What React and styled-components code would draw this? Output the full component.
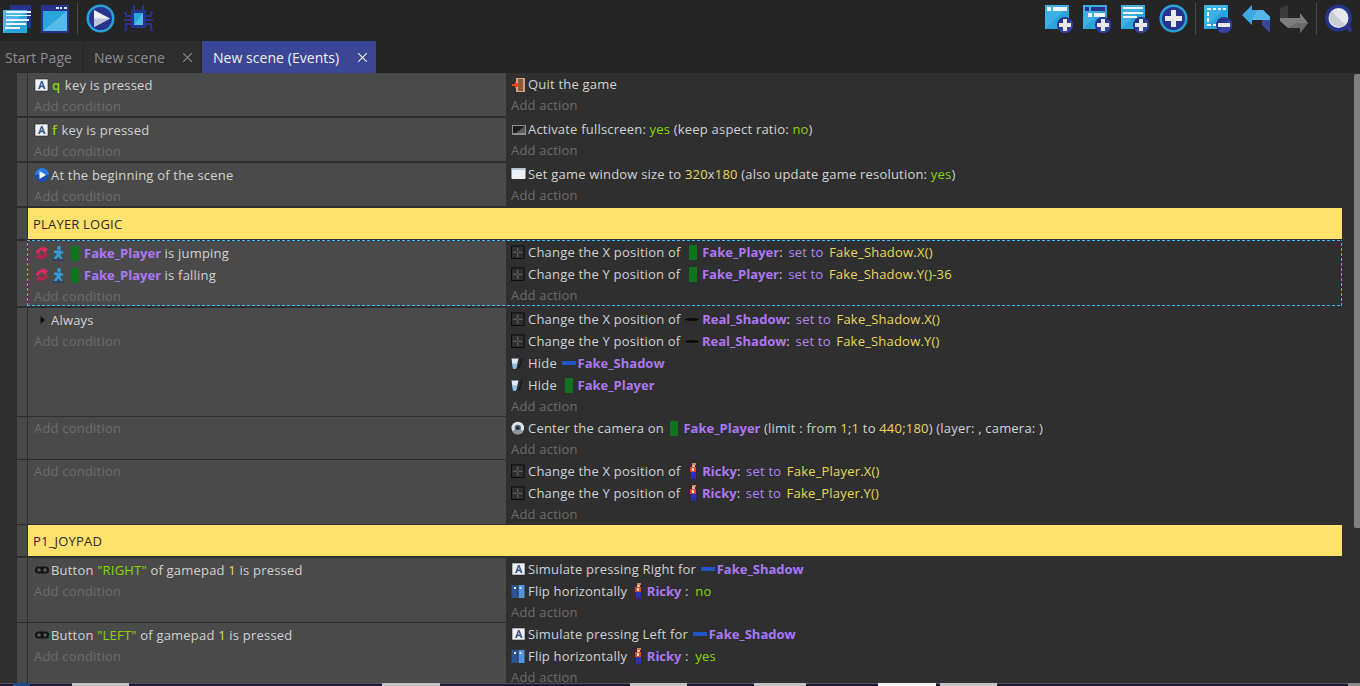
import React from "react";
import styled, { createGlobalStyle } from "styled-components";

const Global = createGlobalStyle`
  html, body { margin: 0; padding: 0; background: #2f2f2f; }
  body { font-family: "Open Sans", "Liberation Sans", sans-serif; overflow: hidden; }
`;

const Page = styled.div`
  width: 1360px;
  height: 686px;
  display: flex;
  flex-direction: column;
  overflow: hidden;
`;

const Toolbar = styled.div`
  height: 41px;
  flex: none;
  background: #252525;
  display: flex;
  align-items: flex-start;
  justify-content: space-between;
`;

const ToolGroup = styled.div`
  display: flex;
  align-items: flex-start;
  height: 38px;
`;

const Tool = styled.div`
  width: 38px;
  height: 38px;
  box-sizing: border-box;
  padding: 5px 0 0 3px;
`;

const Sep = styled.div`
  width: 1px;
  height: 32px;
  margin: 3px 5px 0 1px;
  background: #4a4a4a;
`;

const Art = styled.svg`
  display: block;
  overflow: visible;
`;

const RoundArt = styled(Art)`
  margin-top: -1px;
`;

const TabBar = styled.div`
  height: 32px;
  flex: none;
  background: #252525;
  display: flex;
`;

const Tab = styled.div`
  width: ${(p) => p.$w}px;
  margin-right: 1px;
  display: flex;
  align-items: center;
  justify-content: space-between;
  padding: 0 9px 0 ${(p) => p.$pad}px;
  box-sizing: border-box;
  background: ${(p) => (p.$active ? "#3c4696" : "#2e2e2e")};
  color: ${(p) => (p.$active ? "#f1f1f1" : "#8c8c8c")};
  font-size: 14px;
  letter-spacing: 0.05px;
`;

const Close = styled.svg`
  width: 9px;
  height: 9px;
  stroke: ${(p) => (p.$active ? "#f1f1f1" : "#8c8c8c")};
  stroke-width: 1.2;
`;

const Body = styled.div`
  flex: 1;
  min-height: 0;
  display: flex;
  overflow: hidden;
  background: #2f2f2f;
`;

const Events = styled.div`
  width: 1342px;
  flex: none;
  padding-left: 17px;
  box-sizing: border-box;
  display: flex;
  flex-direction: column;
  gap: 2px;
`;

const Scroll = styled.div`
  width: 6px;
  height: 454px;
  margin: 1px 0 0 12px;
  background: #808080;
  border-radius: 2px 0 0 2px;
`;

const Row = styled.div`
  display: grid;
  grid-template-columns: 10px 1fr;
  column-gap: 1px;
  height: ${(p) => p.$h}px;
  flex: none;
`;

const Handle = styled.div`
  background: #4a4a4a;
`;

const RowMain = styled.div`
  display: grid;
  grid-template-columns: 478px 1fr;
  position: relative;
`;

const dash = "#35bdf8";

const Selection = styled.div`
  position: absolute;
  inset: -1px 0 0 -1px;
  pointer-events: none;
  background:
    repeating-linear-gradient(90deg, ${dash} 0 3px, transparent 3px 5px) top left / 100% 1px no-repeat,
    repeating-linear-gradient(90deg, ${dash} 0 3px, transparent 3px 5px) bottom left / 100% 1px no-repeat,
    repeating-linear-gradient(0deg, ${dash} 0 3px, transparent 3px 5px) top left / 1px 100% no-repeat,
    repeating-linear-gradient(0deg, ${dash} 0 3px, transparent 3px 5px) top right / 1px 100% no-repeat;
`;

const Conditions = styled.div`
  background: #4a4a4a;
  padding: 1px 0 0 6px;
`;

const Actions = styled.div`
  padding: 0 0 0 5px;
`;

const Line = styled.div`
  height: 22px;
  display: flex;
  align-items: center;
  font-size: 13px;
  letter-spacing: 0.2px;
  white-space: pre;
  color: #d2d2d2;
`;

const AddLine = styled(Line)`
  height: 20px;
  color: #6c6c6c;
`;

const Comment = styled.div`
  background: #ffe26c;
  color: #2a2a2a;
  font-size: 13px;
  letter-spacing: 0.2px;
  display: flex;
  align-items: center;
  padding-left: 5px;
`;

const Obj = styled.b`
  color: #ab78f2;
  font-weight: 700;
  letter-spacing: 0;
`;

const Lit = styled.span`
  color: #86d800;
`;

const KeyName = styled(Lit)`
  margin: 0 1px;
  font-weight: 600;
`;

const FlipValue = styled(Lit)`
  margin-left: 3px;
`;

const Num = styled.span`
  color: #e6d95a;
`;

const SetTo = styled.span`
  color: #b384f2;
  margin: 0 2px;
`;

const IconBox = styled.svg`
  flex: none;
  width: ${(p) => p.$w || 16}px;
  height: 16px;
  margin-right: ${(p) => (p.$mr === undefined ? 1 : p.$mr)}px;
`;

const Bar = styled.span`
  flex: none;
  width: 8px;
  height: 15px;
  background: #0f7320;
  margin: 0 5px 0 ${(p) => p.$ml || 0}px;
`;

const Dash = styled.span`
  flex: none;
  width: 14px;
  height: ${(p) => (p.$black ? 3 : 4)}px;
  background: ${(p) => (p.$black ? "#0a0a0a" : "#1f55c8")};
  border-radius: ${(p) => (p.$black ? "50%" : "0")};
  margin: 0 ${(p) => (p.$black ? 3 : 2)}px 0 1px;
`;

const Taskbar = styled.div`
  height: 3px;
  flex: none;
  background: #1f1a2e;
  border-top: 1px solid #55506a;
  box-sizing: border-box;
  display: flex;
`;

const Peek = styled.span`
  margin-left: ${(p) => p.$gap}px;
  width: ${(p) => p.$w}px;
  margin-top: -1px;
  height: 3px;
  background: ${(p) => p.$c};
`;

const RickyArt = styled.svg`
  flex: none;
  width: 8px;
  height: 17px;
  margin: 0 5px 0 ${(p) => p.$ml || 5}px;
`;

/* ---- toolbar art ---- */
const Square = ({ children, w = 28 }) => (
  <Art width={w} height="28" viewBox={`0 0 ${w} 28`} shapeRendering="crispEdges">
    {children}
  </Art>
);

const Plus = ({ minus }) => (
  <g shapeRendering="auto">
    <circle cx="20" cy="20" r="8" fill="#25358f" />
    <path d="M14.300 25.700 25.700 14.300A8 8 0 0 1 14.300 25.700z" fill="#34439f" />
    {minus ? (
      <rect x="14" y="18" width="12" height="4" fill="#e8e8e8" />
    ) : (
      <path d="M18 14h4v4h4v4h-4v4h-4v-4h-4v-4h4z" fill="#e8e8e8" />
    )}
  </g>
);

const TBPages = () => (
  <Square>
    <path d="M7 0h21v23H7z" fill="#27348c" />
    <path d="M0 5h24v23H0z" fill="#2aa5dc" />
    <path d="M0 5h24L0 28z" fill="#4cb8e6" shapeRendering="auto" />
    <path d="M3 6h22v2H3zM3 11h25v-1H3zM3 14h23v2H3zM3 18h20v2H3zM2 22h15v2H2z" fill="#eef4fb" />
    <path d="M24 6h4v2h-4zM26 10h2v1h-2z" fill="#eef4fb" />
  </Square>
);

const TBWindow = () => (
  <Square>
    <path d="M0 0h28v28H0z" fill="#27348c" />
    <path d="M2 6h24v20H2z" fill="#2aa5dc" />
    <path d="M26 6v20H2z" fill="#55bbe8" shapeRendering="auto" />
    <path d="M15 2h3v2h-3zM19 2h2v2h-2zM23 2h3v2h-3z" fill="#dfe8f5" />
  </Square>
);

const TBPlay = () => (
  <RoundArt width="29" height="30" viewBox="0 0 29 30">
    <circle cx="14.500" cy="14.500" r="14" fill="#29a0d6" />
    <circle cx="14.500" cy="14.500" r="11.500" fill="#27348c" />
    <path d="M8 6 24 14.500 8 23z" fill="#eef1f6" />
    <path d="M8 14.500h16L8 23z" fill="#bcc6da" />
  </RoundArt>
);

const TBChip = () => (
  <Square w={29}>
    <path d="M9 0h2v5h7V0h2v5h2v18H7V5h2z" fill="#27348c" />
    <path d="M10 8h9v12h-9z" fill="#2aa5dc" />
    <path d="M19 8v12h-9z" fill="#55bbe8" shapeRendering="auto" />
    <path d="M0 7h3v3h4v2H1V9H0zM22 10h4V7h3v2h-1v3h-6zM0 14h7v2H0zM22 14h7v2h-7zM1 18h6v2H3v6H0v-2h1zM22 18h6v6h1v2h-3v-6h-4z" fill="#27348c" />
  </Square>
);

const TBAddEvent = ({ kind }) => (
  <Square>
    <path d="M0 0h24v24H0z" fill="#2aa5dc" />
    <path d="M0 0h24L0 24z" fill="#40b0e2" shapeRendering="auto" />
    {kind === 0 && <path d="M2 2h4v4H2zM8 2h14v4H8z" fill="#eef4fb" />}
    {kind === 1 && (
      <>
        <path d="M2 2h4v4H2zM8 2h14v4H8z" fill="#27348c" />
        <path d="M5 8h4v4H5zM11 8h11v4H11z" fill="#eef4fb" />
      </>
    )}
    {kind === 2 && <path d="M2 2h20v2H2zM2 7h20v2H2zM2 11h14v2H2z" fill="#eef4fb" />}
    <Plus />
  </Square>
);

const TBAddCircle = () => (
  <RoundArt width="29" height="30" viewBox="0 0 29 30">
    <circle cx="14.500" cy="14.500" r="14" fill="#29a0d6" />
    <circle cx="14.500" cy="14.500" r="11.500" fill="#27348c" />
    <path d="M12 6h5v6h6v5h-6v6h-5v-6H6v-5h6z" fill="#e8e8e8" />
  </RoundArt>
);

const TBDelete = () => (
  <Square>
    <path d="M0 0h24v24H0z" fill="#2aa5dc" />
    <path d="M0 0h24L0 24z" fill="#40b0e2" shapeRendering="auto" />
    <path d="M3 3h4v2H3zM9 3h3v2H9zM14 3h3v2h-3zM19 3h3v2h-3zM3 7h2v4H3zM3 13h2v4H3zM3 19h4v2H3zM9 19h3v2H9z" fill="#eef4fb" />
    <Plus minus />
  </Square>
);

const TBUndo = () => (
  <Art width="28" height="28" viewBox="0 0 28 28">
    <path d="M0 10 10 0v5h11l7 7v3H10v5z" fill="#3ea9df" />
    <path d="M10 15h18v-3l-7-7H15z" fill="#55b6e8" />
    <path d="M20 15h8v13l-8-8z" fill="#3c4696" />
  </Art>
);

const TBRedo = () => (
  <Art width="28" height="28" viewBox="0 0 28 28">
    <path d="M0 3 8 0v13H0z" fill="#3a3a3a" />
    <path d="M0 13h20V8l8 10-8 10v-5H8l-8-7z" fill="#7d7d7d" />
    <path d="M8 23h12v5l8-10H16z" fill="#6a6a6a" />
  </Art>
);

const TBSearch = () => (
  <RoundArt width="28" height="30" viewBox="0 0 28 30">
    <path d="M20 22l3-3 5 7-3 3z" fill="#27348c" />
    <circle cx="13.500" cy="14" r="13.500" fill="#27348c" />
    <circle cx="13.500" cy="14" r="10" fill="#e6e8ee" />
    <path d="M6.500 7 20.500 21A10 10 0 0 1 6.500 7z" fill="#c9ccd4" />
  </RoundArt>
);

/* ---- small event icons ---- */
const KeyIcon = () => (
  <IconBox viewBox="0 0 16 16">
    <rect x="1" y="2" width="13" height="12" fill="#eef1f5" stroke="#222" strokeWidth="0.6" />
    <path d="M4 12 7 4h1.600l3 8h-2l-.6-1.800H6.500L6 12zM7 8.600h1.600L7.800 6z" fill="#3b5b88" />
  </IconBox>
);

const SceneIcon = () => (
  <IconBox viewBox="0 0 16 16">
    <circle cx="8" cy="8" r="7" fill="#1a4fb8" />
    <path d="M1 8a7 7 0 0 1 14 0z" fill="#2c7be0" />
    <path d="M5.500 4 12 8l-6.500 4z" fill="#f2f4f8" />
  </IconBox>
);

const QuitIcon = () => (
  <IconBox viewBox="0 0 16 16">
    <path d="M5 2h9v14H5z" fill="#d2a07c" />
    <path d="M7 3h5v12H7z" fill="#8e5a3c" />
    <path d="M1 8h3V5.500L8 9l-4 3.500V10H1z" fill="#e8431f" />
  </IconBox>
);

const ScreenIcon = () => (
  <IconBox viewBox="0 0 16 16">
    <rect x="1" y="4" width="14" height="10" fill="#8e8e8e" />
    <rect x="2" y="5" width="12" height="7" fill="#1d1d1d" />
    <path d="M14 5v7H5z" fill="#5a5a5a" />
  </IconBox>
);

const WindowIcon = () => (
  <IconBox viewBox="0 0 16 16">
    <rect x="0.500" y="2" width="14" height="11" rx="1" fill="#eef2f7" />
    <rect x="0.500" y="2" width="14" height="2" fill="#b7c4d6" />
  </IconBox>
);

const RefreshIcon = () => (
  <IconBox viewBox="0 0 16 16" $mr={2}>
    <path d="M3.500 8.500A4.500 4.500 0 0 1 10 4.500" fill="none" stroke="#e02a5a" strokeWidth="3" />
    <path d="M8.500 1 14 4l-4.500 4.500z" fill="#e02a5a" />
    <path d="M12.500 7.500A4.500 4.500 0 0 1 6 11.500" fill="none" stroke="#bd2048" strokeWidth="3" />
    <path d="M7.500 15 2 12l4.500-4.500z" fill="#bd2048" />
  </IconBox>
);

const JumpIcon = () => (
  <IconBox viewBox="0 0 12 16" $w={12} $mr={7}>
    <circle cx="7" cy="3" r="2" fill="#2f9ed8" />
    <path d="M2 5.500h7l2.500 2-1 1.500L9 8 8.500 10.500l2 3.500h-2L6.500 11.500 4.500 14H1.500l3-4.500V8H2z" fill="#2f9ed8" />
    <rect x="0" y="14.500" width="12" height="1" fill="#27348c" />
  </IconBox>
);

const MoveIcon = () => (
  <IconBox viewBox="0 0 16 16">
    <rect x="0.500" y="2" width="12.500" height="12.500" fill="#2f2f2f" stroke="#0c0c0c" />
    <path d="M6.750 3.500v4M6.750 9v4M2 8.250h4M7.500 8.250h4" stroke="#6e6e6e" strokeWidth="1" />
  </IconBox>
);

const HideIcon = () => (
  <IconBox viewBox="0 0 16 16" $mr={1}>
    <path d="M0.500 3.500h7L5 13.500H2z" fill="#dcebf7" />
    <path d="M1.500 8.500h5L5 13.500H2z" fill="#8cc0e8" />
    <path d="M10.500 2.500h1L8.500 13.500h-1z" fill="#111" />
  </IconBox>
);

const CameraIcon = () => (
  <IconBox viewBox="0 0 16 16">
    <circle cx="6.800" cy="8" r="6.300" fill="#dfe3e8" />
    <circle cx="6.800" cy="8" r="3.200" fill="#55657a" />
    <circle cx="6.800" cy="8" r="1.500" fill="#10203a" />
    <path d="M1.200 11a6.300 6.300 0 0 0 11.200 0l-2-1H3.200z" fill="#8f96a0" />
  </IconBox>
);

const PadIcon = () => (
  <IconBox viewBox="0 0 16 16">
    <rect x="1" y="4.500" width="14" height="7" rx="3.500" fill="#141414" />
    <circle cx="5" cy="8" r="1.800" fill="#5a5a5a" />
    <circle cx="11" cy="8" r="1.800" fill="#5a5a5a" />
  </IconBox>
);

const FlipIcon = () => (
  <IconBox viewBox="0 0 16 16">
    <rect x="0.500" y="2" width="6" height="13" fill="#2c5596" />
    <rect x="7.500" y="2" width="6" height="13" fill="#4f94e0" />
    <path d="M3 4h2v2H3zM8.500 4h2v2h-2z" fill="#dfe8f5" />
  </IconBox>
);

const Ricky = ({ ml }) => (
  <RickyArt $ml={ml} viewBox="0 0 8 17" shapeRendering="crispEdges">
    <path d="M0 0h8v17H0z" fill="#3d2140" />
    <path d="M3 0h4v2H3z" fill="#c98a4a" />
    <path d="M3 2h3v2H3z" fill="#eab98a" />
    <path d="M1 4h6v5H1z" fill="#d94a2c" />
    <path d="M3 5h2v3H3z" fill="#f0d8c0" />
    <path d="M2 9h5v4H2zM2 13h2v3H2zM5 13h2v3H5z" fill="#2136b8" />
  </RickyArt>
);

const taskSegments = [
  [13, 17, "#1d4a86"],
  [42, 57, "#c4c4c4"],
  [253, 58, "#c4c4c4"],
  [190, 57, "#c4c4c4"],
  [67, 52, "#c4c4c4"],
  [72, 58, "#f4f4f4"],
  [4, 57, "#c4c4c4"],
  [351, 12, "#8a8a8a"],
];

const EventRow = ({ h, selected, conds, acts }) => (
  <Row $h={h}>
    <Handle />
    <RowMain>
      <Conditions>
        {conds.map((c, i) => (
          <Line key={i}>{c}</Line>
        ))}
        <AddLine>Add condition</AddLine>
      </Conditions>
      <Actions>
        {acts.map((a, i) => (
          <Line key={i}>{a}</Line>
        ))}
        <AddLine>Add action</AddLine>
      </Actions>
      {selected && <Selection />}
    </RowMain>
  </Row>
);

const CommentRow = ({ text }) => (
  <Row $h={31}>
    <Handle />
    <Comment>{text}</Comment>
  </Row>
);

const PosLine = ({ axis, icon, name, value }) => (
  <>
    <MoveIcon />
    {`Change the ${axis} position of `}
    {icon}
    <Obj>{name}</Obj>
    {": "}
    <SetTo>set to </SetTo>
    {" "}
    <Num>{value}</Num>
  </>
);

export default function App() {
  return (
    <Page>
      <Global />
      <Toolbar>
        <ToolGroup>
          <Tool><TBPages /></Tool>
          <Tool><TBWindow /></Tool>
          <Sep />
          <Tool><TBPlay /></Tool>
          <Tool><TBChip /></Tool>
        </ToolGroup>
        <ToolGroup>
          <Tool><TBAddEvent kind={0} /></Tool>
          <Tool><TBAddEvent kind={1} /></Tool>
          <Tool><TBAddEvent kind={2} /></Tool>
          <Tool><TBAddCircle /></Tool>
          <Sep />
          <Tool><TBDelete /></Tool>
          <Tool><TBUndo /></Tool>
          <Tool><TBRedo /></Tool>
          <Sep />
          <Tool><TBSearch /></Tool>
        </ToolGroup>
      </Toolbar>
      <TabBar>
        <Tab $w={83} $pad={5}>Start Page</Tab>
        <Tab $w={117} $pad={10}>
          New scene
          <Close viewBox="0 0 10 10"><path d="M0 0 10 10M10 0 0 10" /></Close>
        </Tab>
        <Tab $w={174} $pad={11} $active>
          New scene (Events)
          <Close $active viewBox="0 0 10 10"><path d="M0 0 10 10M10 0 0 10" /></Close>
        </Tab>
      </TabBar>
      <Body>
        <Events>
          <EventRow
            h={43}
            conds={[<><KeyIcon /><KeyName>q</KeyName> key is pressed</>]}
            acts={[<><QuitIcon />Quit the game</>]}
          />
          <EventRow
            h={43}
            conds={[<><KeyIcon /><KeyName>f</KeyName> key is pressed</>]}
            acts={[<><ScreenIcon />Activate fullscreen: <Lit>yes</Lit> (keep aspect ratio: <Lit>no</Lit>)</>]}
          />
          <EventRow
            h={43}
            conds={[<><SceneIcon />At the beginning of the scene</>]}
            acts={[<><WindowIcon />Set game window size to <Num>320</Num>x<Num>180</Num> (also update game resolution: <Lit>yes</Lit>)</>]}
          />
          <CommentRow text="PLAYER LOGIC" />
          <EventRow
            h={65}
            selected
            conds={[
              <><RefreshIcon /><JumpIcon /><Bar /><Obj>Fake_Player</Obj> is jumping</>,
              <><RefreshIcon /><JumpIcon /><Bar /><Obj>Fake_Player</Obj> is falling</>,
            ]}
            acts={[
              <PosLine axis="X" icon={<Bar $ml={5} />} name="Fake_Player" value="Fake_Shadow.X()" />,
              <PosLine axis="Y" icon={<Bar $ml={5} />} name="Fake_Player" value="Fake_Shadow.Y()-36" />,
            ]}
          />
          <EventRow
            h={107}
            conds={[<><IconBox viewBox="0 0 16 16"><path d="M6.500 4l4.500 4-4.500 4z" fill="#101010" /></IconBox>Always</>]}
            acts={[
              <PosLine axis="X" icon={<Dash $black />} name="Real_Shadow" value="Fake_Shadow.X()" />,
              <PosLine axis="Y" icon={<Dash $black />} name="Real_Shadow" value="Fake_Shadow.Y()" />,
              <><HideIcon />Hide <Dash /><Obj>Fake_Shadow</Obj></>,
              <><HideIcon />Hide <Bar $ml={4} /><Obj>Fake_Player</Obj></>,
            ]}
          />
          <EventRow
            h={41}
            conds={[]}
            acts={[<><CameraIcon />Center the camera on <Bar $ml={3} /><Obj>Fake_Player</Obj> (limit : from <Num>1</Num>;<Num>1</Num> to <Num>440</Num>;<Num>180</Num>) (layer: , camera: )</>]}
          />
          <EventRow
            h={63}
            conds={[]}
            acts={[
              <PosLine axis="X" icon={<Ricky />} name="Ricky" value="Fake_Player.X()" />,
              <PosLine axis="Y" icon={<Ricky />} name="Ricky" value="Fake_Player.Y()" />,
            ]}
          />
          <CommentRow text="P1_JOYPAD" />
          <EventRow
            h={63}
            conds={[<><PadIcon />Button <Lit>"RIGHT"</Lit> of gamepad <Num>1</Num> is pressed</>]}
            acts={[
              <><KeyIcon />Simulate pressing Right for <Dash /><Obj>Fake_Shadow</Obj></>,
              <><FlipIcon />Flip horizontally <Ricky ml={3} /><Obj>Ricky</Obj> : <FlipValue>no</FlipValue></>,
            ]}
          />
          <EventRow
            h={63}
            conds={[<><PadIcon />Button <Lit>"LEFT"</Lit> of gamepad <Num>1</Num> is pressed</>]}
            acts={[
              <><KeyIcon />Simulate pressing Left for <Dash /><Obj>Fake_Shadow</Obj></>,
              <><FlipIcon />Flip horizontally <Ricky ml={3} /><Obj>Ricky</Obj> : <FlipValue>yes</FlipValue></>,
            ]}
          />
        </Events>
        <Scroll />
      </Body>
      <Taskbar>
        {taskSegments.map(([gap, w, c], i) => (
          <Peek key={i} $gap={gap} $w={w} $c={c} />
        ))}
      </Taskbar>
    </Page>
  );
}
